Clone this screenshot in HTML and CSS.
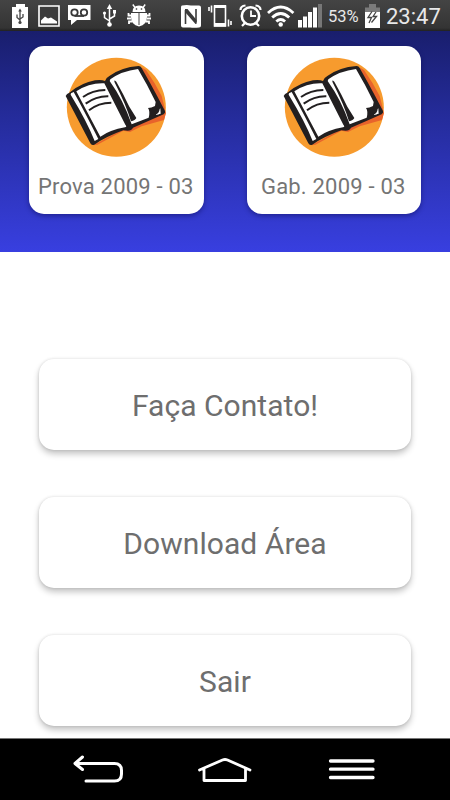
FILE: index.html
```html
<!DOCTYPE html>
<html lang="pt-BR">
<head>
    <meta charset="UTF-8">
    <meta name="viewport" content="width=device-width, initial-scale=1.0">
    <title>Provas</title>
    <link rel="stylesheet" href="styles.css">
</head>
<body>

<!-- shared book picture -->
<svg class="defs" width="0" height="0">
    <symbol id="book" viewBox="0 0 336 336">
        <circle cx="169" cy="172" r="148.500" fill="#f79b2e"/>
        <path d="M244 52 L258 60 Q286 100 305 138 L318 190 L312 210 L245 229 L210 246 L190 242 L112 284 L100 286 L212 225 L310 185Z" fill="#e8632b"/>
        <path d="M17 138 Q20 131 28 128 Q65 98 105 91 Q124 88 135 93 Q138 83 148 78 Q183 52 236 48 Q242 48 245 54 Q268 94 291 137 L315 183 Q317 189 311 193 L219 233 Q215 242 203 242 L190 241 Q140 259 103 284 Q95 288 91 280Z" fill="#221f20"/>
        <path d="M49 124 Q88 98 133 100 L196 224 Q202 230 195 232 Q150 240 121 260 L50 126Z" fill="#fff"/>
        <path d="M33 130 L41 126 Q66 170 115 267 L104 273 Q82 216 32 134Z" fill="#fff"/>
        <path d="M151 88 Q185 63 234 57 Q262 104 287 156 L285 168 Q274 174 264 174 Q271 184 266 203 L215 223 Q190 150 149 93Z" fill="#fff"/>
        <path d="M164 91 L169 95 Q188 128 208 170 L229 204 Q226 211 213 214 Q200 168 163 95Z" fill="#221f20"/>
        <path d="M301 175 L302 191 L285 195 Q298 190 299 177Z" fill="#fff"/>
        <path d="M69 141 Q97 121 136 120 M77 161 Q109 138 145 139 M87 181 Q115 158 154 158" fill="none" stroke="#221f20" stroke-width="6"/>
    </symbol>
</svg>

<header class="status-bar">
    <svg class="icon" width="32" height="31" viewBox="4 0 32 31">
        <path d="M16 4h9v3h3v21H12V7h4z" fill="#fff"/>
        <path d="M20 10v13M20 20l-3-2.500v-3M20 19l3-2v-3" fill="none" stroke="#444" stroke-width="1.300"/>
        <path d="M18.200 11.500L20 8.500l1.800 3z" fill="#444"/>
        <circle cx="20" cy="22.500" r="1.600" fill="#444"/>
    </svg>
    <svg class="icon" width="28" height="31" viewBox="36 0 28 31">
        <path d="M39 6h20v20H39z" fill="#3c3c3c" stroke="#fff" stroke-width="1.600"/>
        <path d="M41 23.500v-3l4-4 3 2 3-1 6 4v2z" fill="#fff"/>
    </svg>
    <svg class="icon" width="32" height="31" viewBox="64 0 32 31">
        <path d="M68 5h22.500v15H77l-6 5v-5h-3z" fill="#fff"/>
        <g fill="none" stroke="#383838" stroke-width="1.800"><circle cx="74.500" cy="12.500" r="3.200"/><circle cx="84" cy="12.500" r="3.200"/><path d="M74.500 16h9.500"/></g>
    </svg>
    <svg class="icon" width="28" height="31" viewBox="96 0 28 31">
        <path d="M109.500 7v17M109.500 21l-5-3.500V13M109.500 19l5-3v-4" fill="none" stroke="#fff" stroke-width="1.500"/>
        <path d="M106.800 9l2.700-5 2.700 5z" fill="#fff"/>
        <circle cx="109.500" cy="24.500" r="2.300" fill="#fff"/>
        <circle cx="104.500" cy="13" r="1.600" fill="#fff"/>
        <path d="M113 10h3v3.500h-3z" fill="#fff"/>
    </svg>
    <svg class="icon" width="32" height="31" viewBox="124 0 32 31">
        <path d="M135 7.500l-2.200-3M143 7.500l2.200-3" fill="none" stroke="#fff" stroke-width="1.400"/>
        <path d="M132.500 12q0-6.500 6.500-6.500t6.500 6.500z" fill="#fff"/>
        <path d="M131 13h16v4q0 8-8 9.500-8-1.500-8-9.500z" fill="#fff"/>
        <path d="M131.500 15.500h-3V13M131 18.500h-4M132 21.500h-3V24M146.500 15.500h3V13M147 18.500h4M146 21.500h3V24" fill="none" stroke="#fff" stroke-width="1.800"/>
        <path d="M139 13v12" stroke="#444" stroke-width="1"/>
        <path d="M135.800 9h1.400M140.800 9h1.400" stroke="#444" stroke-width="1.400"/>
    </svg>
    <span class="spacer"></span>
    <svg class="icon" width="28" height="31" viewBox="177 0 28 31">
        <path d="M182 5.500q5-.8 9 0h8q2 0 2 2v18q0 2-2 2-5 .5-9 0h-7q-2 0-2-2v-18q0-2 1-2z" fill="#fff"/>
        <path d="M185.500 24V10M196 22.500V9" fill="none" stroke="#3a3a3a" stroke-width="1.600"/>
        <path d="M185 9h2.500l9 11v4h-1L185 12z" fill="#3a3a3a"/>
    </svg>
    <svg class="icon" width="31" height="31" viewBox="205 0 31 31">
        <path d="M214.500 6h11v20h-11z" fill="none" stroke="#fff" stroke-width="1.600"/>
        <path d="M214 5h12v3h-12zM214 23h12v3.500h-12z" fill="#fff"/>
        <path d="M211.500 5.500v7M209 7v4M228.500 19.500v7M231 21v4" stroke="#fff" stroke-width="1.600"/>
    </svg>
    <svg class="icon" width="29" height="31" viewBox="236 0 29 31">
        <g fill="none" stroke="#fff"><circle cx="250.500" cy="16" r="8.700" stroke-width="2.600"/><path d="M251 10.500v5.500h5" stroke-width="1.800"/><path d="M240.500 10q0-4 5-4.500M260.500 10q0-4-5-4.500M245 23l-3 3M256 23l3 3" stroke-width="2.200"/></g>
    </svg>
    <svg class="icon" width="30" height="31" viewBox="265 0 30 31">
        <g fill="none" stroke="#fff" stroke-width="2.800"><path d="M268 13q12.700-12 25.400 0"/><path d="M272.200 17.500q8.500-8 17 0"/><path d="M276.300 21.500q4.400-4 8.800 0"/></g>
        <circle cx="280.700" cy="24.500" r="2.200" fill="#fff"/>
    </svg>
    <svg class="icon" width="31" height="31" viewBox="295 0 31 31">
        <path d="M298 20h4v7.500h-4zM303 16.500h4v11h-4zM308 12h4v15.500h-4zM313 7.500h4v20h-4z" fill="#fff"/>
        <path d="M318 4h4v23.500h-4z" fill="#777"/>
    </svg>
    <span class="percent">53%</span>
    <svg class="icon" width="22" height="31" viewBox="362 0 22 31">
        <path d="M369 4h7v3.500h4V12h-15V7.500h4z" fill="#7b7b7b"/>
        <path d="M365 12h15v16h-15z" fill="#fff"/>
        <path d="M372 11.500l-4 6h3.500l-2.500 5.500M376 12l-3 4.500h3.500l-5 6" fill="none" stroke="#444" stroke-width="1.300"/>
    </svg>
    <span class="clock">23:47</span>
</header>

<section class="banner">
    <div class="card">
        <svg class="book" width="112" height="112"><use href="#book"/></svg>
        <p class="card-label">Prova 2009 - 03</p>
    </div>
    <div class="card">
        <svg class="book" width="112" height="112"><use href="#book"/></svg>
        <p class="card-label">Gab. 2009 - 03</p>
    </div>
</section>

<main class="menu">
    <button class="menu-button">Faça Contato!</button>
    <button class="menu-button">Download Área</button>
    <button class="menu-button">Sair</button>
</main>

<nav class="nav-bar">
    <svg width="54" height="32" viewBox="71 753 54 32">
        <path d="M76 763.500h38.500q7 0 7 7v3.500q0 7-7 7H86M82.500 757L75 763.500l7.500 6" fill="none" stroke="#fff" stroke-width="3" stroke-linecap="round" stroke-linejoin="round"/>
    </svg>
    <svg width="56" height="32" viewBox="197 753 56 32">
        <path d="M199.500 770l23-10q2.500-1 5 0l22.500 10M204 769v11.500h41.500V769" fill="none" stroke="#fff" stroke-width="2.800" stroke-linecap="round" stroke-linejoin="round"/>
    </svg>
    <svg width="54" height="32" viewBox="325 753 54 32">
        <path d="M330.500 761h42.500M330.500 769.200h42.500M330.500 777.500h42.500" stroke="#fff" stroke-width="3.300" stroke-linecap="round"/>
    </svg>
</nav>

</body>
</html>
```
FILE: styles.css
```css
* {
    box-sizing: border-box;
}
body {
    display: flex;
    flex-direction: column;
    height: 800px;
    margin: 0;
    overflow: hidden;
    background-color: #fff;
    font-family: Roboto, sans-serif;
}
.defs {
    display: none;
}
.status-bar {
    display: flex;
    flex: none;
    height: 31px;
    padding-left: 4px;
    background: linear-gradient(#444, #343434 90%, #222);
    color: #e8e8e8;
    line-height: 33px;
    white-space: nowrap;
}
.icon {
    flex: none;
}
.spacer {
    width: 21px;
}
.percent {
    width: 36px;
    padding-left: 2px;
    font-size: 16.5px;
}
.clock {
    padding-left: 2px;
    font-size: 22px;
}
.banner {
    display: flex;
    flex: none;
    gap: 43px;
    height: 221px;
    padding: 14.5px 29px 0;
    background: linear-gradient(#191e6d, #252c9c 40%, #383fe0);
}
.card {
    flex: none;
    width: 174.5px;
    height: 168px;
    padding-top: 4.5px;
    border-radius: 15px;
    background-color: #fff;
    box-shadow: 0 2px 5px rgba(0, 0, 60, 0.4);
    text-align: center;
}
.book {
    display: block;
    margin: 0 auto;
}
.card-label {
    margin: 11px 0 0;
    padding-right: 1px;
    color: #757575;
    font-size: 22px;
    letter-spacing: 0.2px;
    line-height: 28px;
    white-space: nowrap;
}
.menu {
    display: flex;
    flex: none;
    flex-direction: column;
    gap: 47px;
    height: 486px;
    padding: 106.5px 39px 0;
}
.menu-button {
    flex: none;
    height: 91px;
    padding: 3px 0 0;
    border: 0;
    border-radius: 15px;
    background-color: #fff;
    box-shadow: 0 4px 6px rgba(0, 0, 0, 0.23), 0 0 3px rgba(0, 0, 0, 0.13);
    color: #6e6e6e;
    font-family: Roboto, sans-serif;
    font-size: 30px;
    letter-spacing: 0.05px;
}
.nav-bar {
    display: flex;
    flex: none;
    height: 62px;
    padding: 15px 0 0 71px;
    gap: 72px;
    border-top: 1px solid #777;
    background-color: #000;
}
.nav-bar svg {
    margin-top: -1px;
}
```
